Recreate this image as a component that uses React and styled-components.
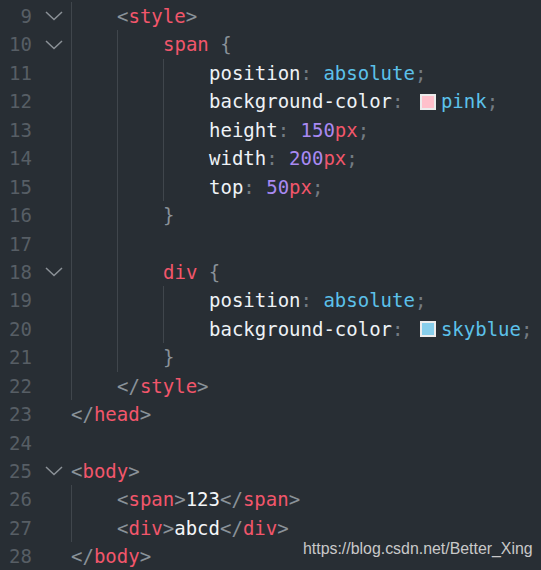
import styled, { createGlobalStyle } from "styled-components";

const GlobalStyle = createGlobalStyle`
  html, body {
    margin: 0;
    padding: 0;
    background: #282e34;
  }
`;

const Editor = styled.div`
  position: relative;
  width: 541px;
  height: 570px;
  overflow: hidden;
  background: #282e34;
  padding-top: 2px;
  box-sizing: border-box;
  font-family: "DejaVu Sans Mono", "Liberation Mono", monospace;
  font-size: 19px;
`;

const Row = styled.div`
  display: flex;
  align-items: stretch;
  height: 28.45px;
  line-height: 28.45px;
  white-space: pre;
`;

const LineNo = styled.div`
  width: 32px;
  text-align: right;
  color: #575e65;
  flex-shrink: 0;
`;

const Fold = styled.div`
  width: 39px;
  flex-shrink: 0;
  display: flex;
  align-items: center;
  padding-left: 13px;
  box-sizing: border-box;
`;

const Code = styled.div`
  display: flex;
  align-items: stretch;
`;

const Indent = styled.span`
  display: inline-block;
  width: 46px;
  border-left: 1px solid #40464c;
  box-sizing: border-box;
`;

const colors = {
  p: "#8a9299",
  c: "#737b82",
  t: "#f2566b",
  k: "#eef2f6",
  v: "#5cc1ea",
  n: "#a98af2",
  u: "#f2566b",
  x: "#f4f6f8",
};

const Tok = styled.span`
  color: ${(p) => colors[p.$kind]};
`;

const Swatch = styled.span`
  display: inline-block;
  align-self: center;
  width: 16px;
  height: 16px;
  margin: 0 5px 0 5px;
  border: 2px solid #ececec;
  box-sizing: border-box;
  background: ${(p) => p.$color};
`;

const Watermark = styled.div`
  position: absolute;
  left: 303px;
  top: 540px;
  font-family: "Liberation Sans", Arial, sans-serif;
  font-size: 15.9px;
  color: #c9c9c9;
`;

const Chevron = () => (
  <svg width="18" height="10" viewBox="0 0 18 10">
    <path d="M1 1 L9 8.5 L17 1" fill="none" stroke="#8b9197" strokeWidth="1.5" />
  </svg>
);

const lines = [
  { n: 9, fold: true, ind: 1, toks: [["p", "<"], ["t", "style"], ["p", ">"]] },
  { n: 10, fold: true, ind: 2, toks: [["t", "span"], ["x", " "], ["p", "{"]] },
  { n: 11, ind: 3, toks: [["k", "position"], ["c", ": "], ["v", "absolute"], ["c", ";"]] },
  { n: 12, ind: 3, toks: [["k", "background-color"], ["c", ": "], ["sw", "pink"], ["v", "pink"], ["c", ";"]] },
  { n: 13, ind: 3, toks: [["k", "height"], ["c", ": "], ["n", "150"], ["u", "px"], ["c", ";"]] },
  { n: 14, ind: 3, toks: [["k", "width"], ["c", ": "], ["n", "200"], ["u", "px"], ["c", ";"]] },
  { n: 15, ind: 3, toks: [["k", "top"], ["c", ": "], ["n", "50"], ["u", "px"], ["c", ";"]] },
  { n: 16, ind: 2, toks: [["p", "}"]] },
  { n: 17, ind: 2, toks: [] },
  { n: 18, fold: true, ind: 2, toks: [["t", "div"], ["x", " "], ["p", "{"]] },
  { n: 19, ind: 3, toks: [["k", "position"], ["c", ": "], ["v", "absolute"], ["c", ";"]] },
  { n: 20, ind: 3, toks: [["k", "background-color"], ["c", ": "], ["sw", "skyblue"], ["v", "skyblue"], ["c", ";"]] },
  { n: 21, ind: 2, toks: [["p", "}"]] },
  { n: 22, ind: 1, toks: [["p", "</"], ["t", "style"], ["p", ">"]] },
  { n: 23, ind: 0, toks: [["p", "</"], ["t", "head"], ["p", ">"]] },
  { n: 24, ind: 0, toks: [] },
  { n: 25, fold: true, ind: 0, toks: [["p", "<"], ["t", "body"], ["p", ">"]] },
  { n: 26, ind: 1, toks: [["p", "<"], ["t", "span"], ["p", ">"], ["x", "123"], ["p", "</"], ["t", "span"], ["p", ">"]] },
  { n: 27, ind: 1, toks: [["p", "<"], ["t", "div"], ["p", ">"], ["x", "abcd"], ["p", "</"], ["t", "div"], ["p", ">"]] },
  { n: 28, ind: 0, toks: [["p", "</"], ["t", "body"], ["p", ">"]] },
];

const App = () => (
  <Editor>
    <GlobalStyle />
    {lines.map((line) => (
      <Row key={line.n}>
        <LineNo>{line.n}</LineNo>
        <Fold>{line.fold && <Chevron />}</Fold>
        <Code>
          {Array.from({ length: line.ind }).map((_, i) => (
            <Indent key={i} />
          ))}
          {line.toks.map(([kind, text], i) =>
            kind === "sw" ? (
              <Swatch key={i} $color={text} />
            ) : (
              <Tok key={i} $kind={kind}>
                {text}
              </Tok>
            )
          )}
        </Code>
      </Row>
    ))}
    <Watermark>https://blog.csdn.net/Better_Xing</Watermark>
  </Editor>
);

export default App;
